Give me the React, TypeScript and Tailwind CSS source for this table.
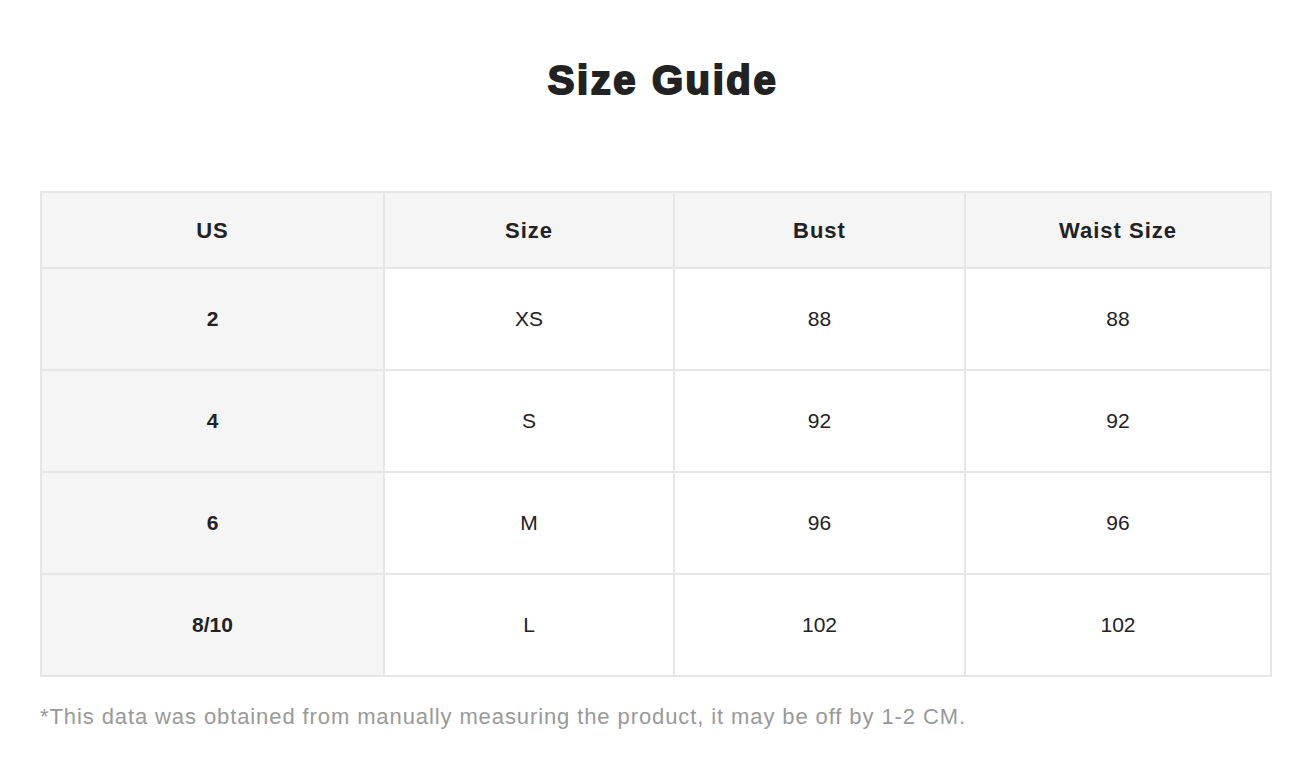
import React from "react";

const rows = [
  { us: "2", size: "XS", bust: "88", waist: "88" },
  { us: "4", size: "S", bust: "92", waist: "92" },
  { us: "6", size: "M", bust: "96", waist: "96" },
  { us: "8/10", size: "L", bust: "102", waist: "102" },
];

function SizeTable() {
  return (
    <table className="w-[1232px] table-fixed border-collapse border-2 border-[#e6e6e6] text-[21px] text-[#222]">
      <colgroup>
        <col className="w-[343px]" />
        <col className="w-[290px]" />
        <col className="w-[291px]" />
        <col />
      </colgroup>
      <thead>
        <tr className="h-[76px] bg-[#f5f5f5]">
          {["US", "Size", "Bust", "Waist Size"].map((h) => (
            <th key={h} className="border-2 border-[#e6e6e6] text-center text-[22px] font-bold tracking-[1px]">
              {h}
            </th>
          ))}
        </tr>
      </thead>
      <tbody>
        {rows.map((r) => (
          <tr key={r.us} className="h-[102px]">
            <td className="border-2 border-[#e6e6e6] bg-[#f5f5f5] text-center font-bold">{r.us}</td>
            <td className="border-2 border-[#e6e6e6] text-center">{r.size}</td>
            <td className="border-2 border-[#e6e6e6] text-center">{r.bust}</td>
            <td className="border-2 border-[#e6e6e6] text-center">{r.waist}</td>
          </tr>
        ))}
      </tbody>
    </table>
  );
}

export default function App() {
  return (
    <div className="min-h-[784px] bg-white px-10 font-['Liberation_Sans',Arial,sans-serif]">
      <h1 className="pt-[56px] pl-[10px] text-center text-[40px] leading-[48px] font-bold tracking-[2.6px] text-[#222] [-webkit-text-stroke:2px_#222]">
        Size Guide
      </h1>
      <div className="mt-[87px]">
        <SizeTable />
      </div>
      <p className="mt-[23px] text-[22px] leading-[33px] tracking-[0.9px] text-[#999]">
        *This data was obtained from manually measuring the product, it may be off by 1-2 CM.
      </p>
    </div>
  );
}
